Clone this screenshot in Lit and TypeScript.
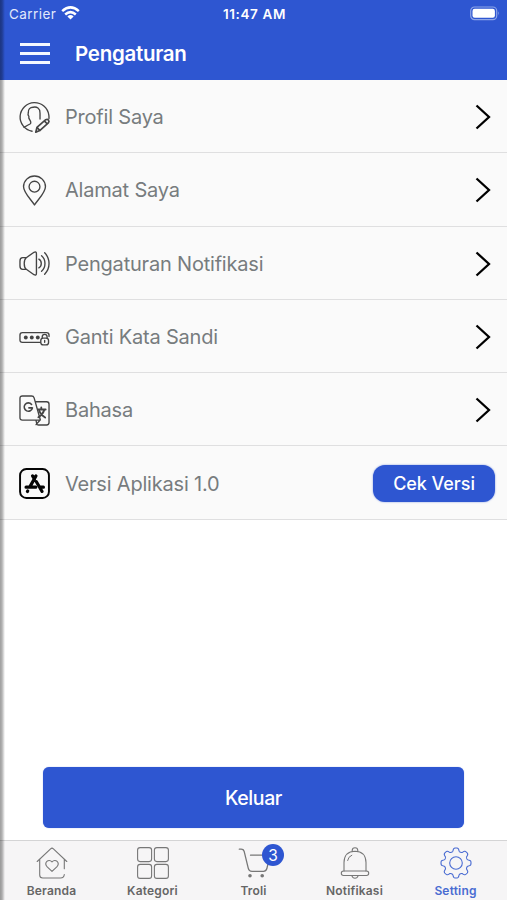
import { LitElement, html, css, svg } from "lit";
import { customElement, property } from "lit/decorators.js";
import { classMap } from "lit/directives/class-map.js";

/** Closed outline of an eight-lobed gear centred on (16, 16). */
const gearPath = (() => {
  const pts: string[] = [];
  for (let i = 0; i < 240; i++) {
    const a = (i / 240) * Math.PI * 2;
    const r = 13.3 + 1.75 * Math.tanh(1.9 * Math.cos(8 * a) + 0.25);
    pts.push(`${(16 + r * Math.sin(a)).toFixed(2)} ${(16 - r * Math.cos(a)).toFixed(2)}`);
  }
  return `M${pts.join("L")}Z`;
})();

const icons: Record<string, unknown> = {
  profile: svg`
    <path d="M30.900 17.200Q31.100 15.500 30.800 13.500A14.900 14.900 0 1 0 13.500 30.200"/>
    <path d="M5.200 26.200Q9.500 23.600 11.400 22.700C12.800 21.800 12.100 20 11 18.300Q9.700 16.500 10.200 14.800Q8.800 13.200 9.600 11.200C9.300 7.500 11.500 5.300 14.700 5.400C18.200 4.600 21.900 6.500 21.700 11.500V17.500"/>
    <path d="M17.300 31.200L18.500 26.300L27.600 18.300Q29.300 17.300 30.400 18.700Q31.600 20.100 30.300 21.600L21.400 29.500ZM18.600 26.200L21.500 29.500M26.200 19.500L29.200 22.700" stroke-width="1.700"/>`,
  pin: svg`
    <path d="M16 31C13.500 26.500 4.700 18.500 4.700 12.100A11.300 11.100 0 0 1 27.300 12.100C27.300 18.500 18.500 26.500 16 31Z"/>
    <circle cx="16" cy="12.100" r="5.600"/>`,
  sound: svg`
    <path d="M7.500 10H3.800Q1 10 1 13.500V18.500Q1 22 3.800 22H7.500Q5.400 20.500 5.400 16T7.500 10L15.500 4.400Q18 3.300 18 6V26Q18 28.700 15.500 27.600L7.500 22"/>
    <path d="M20.500 11.500Q23 12.800 23 16T20.500 20.500M23.300 8Q26.800 10.900 26.800 16T23.300 24M26.500 5Q31 9.600 31 16T26.500 27"/>`,
  password: svg`
    <path d="M22 21H3.500Q1 21 1 18.500V13.500Q1 11 3.500 11H28.500Q31 11 31 13.500V15"/>
    <g class="solid"><circle cx="7" cy="16" r="2"/><circle cx="13.200" cy="16" r="2"/><circle cx="19.400" cy="16" r="2"/></g>
    <rect x="22.500" y="16.600" width="8" height="7" rx="2.500"/>
    <path d="M24 16.400V15.200A2.500 2.500 0 0 1 29 15.200V16.400M26.500 19V21"/>`,
  translate: svg`
    <path d="M17.200 7H28.500Q31 7 31 9.500V28.500Q31 31 28.500 31H20Q18.700 31 18.300 29.500L17.500 26H3.500Q1 26 1 23.500V3.500Q1 1 3.500 1H13Q15 1 15.600 3L22 25.500L17.600 30.600M17.500 26H21.800"/>
    <path d="M13 9.700A4.300 4.300 0 1 0 13.900 13.300H10.200" stroke-width="1.600"/>
    <path d="M19.800 15H27.500M23 12.800V15M26.200 15.300Q24.500 20.500 20 23M21 16.500Q22.500 20.700 27 23.300" stroke-width="1.900"/>`,
  store: svg`
    <rect x="1.100" y="1.100" width="29.800" height="29.800" rx="6.500" stroke-width="2"/>
    <path d="M17.500 8.200L11.200 19.500M14 8.200L16 11.500M17.800 14L23.800 24.200M7.300 19.800H17.300M22 19.800H25.200M8.700 24.200L9 23.800" stroke-width="3.300"/>`,
  home: svg`
    <path d="M1.200 14.500L14.600 1.800Q16 .5 17.400 1.800L30.800 14.500M3.700 12.400V28Q3.700 31 6.700 31H24.500Q28 31 28.300 27.500M28.300 12.400V21.800"/>
    <path d="M16 24.400L11.200 19.900C7.500 16 12.500 11 16 14.900C19.500 11 24.500 16 20.800 19.900Z"/>`,
  grid: svg`
    <rect x=".6" y=".6" width="14" height="14" rx="2.500"/><rect x="17.400" y=".6" width="14" height="14" rx="2.500"/>
    <rect x=".6" y="17.400" width="14" height="14" rx="2.500"/><rect x="17.400" y="17.400" width="14" height="14" rx="2.500"/>`,
  cart: svg`
    <path d="M1.300 2.200H3.200Q5.500 2.200 6.100 4.200L10.300 21.300Q11 24.300 14 24.300H25.500Q28 24.300 28.800 21.800L31.200 11.500Q31.800 8.200 29 8.200H12.500" stroke-width="1.300"/>
    <g class="solid"><circle cx="12" cy="28.700" r="1.800"/><circle cx="24.200" cy="28.700" r="1.800"/></g>`,
  bell: svg`
    <path d="M13.200 4.300V3.500A2.800 2.800 0 0 1 18.800 3.500V4.300M5 24V15.500Q5.300 4.500 16 4.300Q26.700 4.500 27 15.500V24M12.800 28.600Q13.700 31.200 16 31.200T19.200 28.600"/>
    <rect x="2.300" y="24" width="27.400" height="4.500" rx="2.200"/><path d="M8.600 13.500Q9.200 9.600 12.800 8.200" stroke-width="1"/>`,
  gear: svg`<path d=${gearPath}/><circle cx="16" cy="16" r="6.300"/>`,
};

@customElement("line-icon")
class LineIcon extends LitElement {
  @property() name = "";
  static styles = css`
    :host { display: block; width: 32px; height: 32px; flex: none; }
    svg { display: block; width: 100%; height: 100%; overflow: visible; fill: none;
      stroke: currentColor; stroke-width: var(--weight, 1.250); stroke-linecap: round; stroke-linejoin: round; }
    .solid { fill: currentColor; stroke: none; }
  `;
  render() {
    return html`<svg viewBox="0 0 32 32">${icons[this.name]}</svg>`;
  }
}

const rows = [
  { icon: "profile", label: "Profil Saya" },
  { icon: "pin", label: "Alamat Saya" },
  { icon: "sound", label: "Pengaturan Notifikasi" },
  { icon: "password", label: "Ganti Kata Sandi" },
  { icon: "translate", label: "Bahasa" },
  { icon: "store", label: "Versi Aplikasi 1.0", action: "Cek Versi" },
];

const tabs = [
  { icon: "home", label: "Beranda" },
  { icon: "grid", label: "Kategori" },
  { icon: "cart", label: "Troli", badge: 3 },
  { icon: "bell", label: "Notifikasi" },
  { icon: "gear", label: "Setting", active: true },
];

@customElement("app-root")
class AppRoot extends LitElement {
  static styles = css`
    :host { display: flex; flex-direction: column; position: relative; box-sizing: border-box; width: 100%; height: 900px;
      overflow: hidden; background: #fff; font-family: Inter, "Liberation Sans", sans-serif; }
    header { height: 80px; background: #2e56d1; color: #fff; flex: none; }
    .status { display: grid; grid-template-columns: 1fr auto 1fr; align-items: center; height: 27px; padding: 0 7px 0 9px; font-size: 13.500px; }
    .carrier { display: flex; align-items: center; gap: 5px; color: #e1e8fb; letter-spacing: 0.420px; }
    .wifi { width: 19px; height: 14px; margin-top: -2px; }
    .clock { font-weight: 600; font-size: 13.500px; letter-spacing: 0.620px; }
    .battery { justify-self: end; width: 30px; height: 15px; }
    .bar { display: flex; align-items: center; height: 53px; padding-left: 20px; gap: 25px; }
    .menu { width: 30px; height: 21px; display: flex; flex-direction: column; justify-content: space-between; }
    .line { height: 3px; background: #f5f8ff; }
    h1 { margin: 0; font-size: 20.500px; font-weight: 600; letter-spacing: -0.280px; }
    .row { display: flex; align-items: center; box-sizing: border-box; height: 73.300px; padding: 2px 12px 0 19px; background: #fafafa; border-bottom: 1.500px solid #dfdfe0; }
    .row line-icon { width: 31px; height: 31px; color: #444; --weight: 1.400; }
    .row .store { color: #050505; }
    .label { flex: 1; margin-left: 15px; font-size: 20px; letter-spacing: -0.200px; color: #777c7e; white-space: nowrap; }
    .chevron { width: 16px; height: 26px; margin-right: 4.500px; fill: none; stroke: #000; stroke-width: 2.300; }
    .check { width: 122px; height: 37px; border-radius: 12px; background: #2e56d1; color: #fff; display: grid; place-items: center; font-size: 18px; font-weight: 500; letter-spacing: -0.050px; box-shadow: 0 0 2px #7892de; }
    .body { flex: 1; display: flex; flex-direction: column; justify-content: flex-end; padding: 0 43px 12px; }
    .logout { height: 61px; border-radius: 6px; background: #2e56d1; color: #fff; display: grid; place-items: center; font-size: 19.500px; font-weight: 500; letter-spacing: -0.400px; box-shadow: 0 0 1px #7892de; }
    nav { flex: none; display: flex; box-sizing: border-box; height: 60px; background: #f6f5f6; border-top: 1px solid #d4d4d5; padding: 0 1px; }
    .tab { flex: 1; display: flex; flex-direction: column; align-items: center; padding-top: 6px; color: #777; }
    .tab line-icon { --weight: 1.100; }
    .caption { margin-top: 4px; font-size: 12px; line-height: 15px; font-weight: 600; color: #666; letter-spacing: 0.180px; }
    .active, .active .caption { color: #4a6cd2; }
    .glyph { position: relative; }
    .badge { position: absolute; left: 24.500px; top: -3px; width: 22px; height: 22px; border-radius: 50%; background: #2e56d1; color: #fff; display: grid; place-items: center; font-size: 15.500px; }
    .edge { position: absolute; inset: 0 auto 0 0; width: 5px; background: linear-gradient(90deg, rgba(0,0,0,.38), rgba(0,0,0,.3) 40%, rgba(0,0,0,0)); }
  `;
  render() {
    return html`
      <header>
        <div class="status">
          <div class="carrier"><span>Carrier</span>
            <svg class="wifi" viewBox="0 0 19 14" fill="none" stroke="#fff" stroke-width="2.500">
              <path d="M1.200 5.200Q9.500-2.400 17.800 5.200M4.200 8.500Q9.500 3.700 14.800 8.500"/><path d="M6.400 10.400Q9.500 7.800 12.600 10.400L9.500 13.600Z" fill="#fff" stroke="none"/>
            </svg>
          </div>
          <div class="clock">11:47 AM</div>
          <svg class="battery" viewBox="0 0 30 15">
            <rect x=".7" y="1" width="26" height="12.600" rx="3.800" fill="none" stroke="#8ea5e8" stroke-width="1.200"/>
            <rect x="2.500" y="2.800" width="22.400" height="9" rx="2.200" fill="#fff"/><path d="M28.200 5.200Q30 7.300 28.200 9.400Z" fill="#8ea5e8"/>
          </svg>
        </div>
        <div class="bar"><div class="menu"><div class="line"></div><div class="line"></div><div class="line"></div></div><h1>Pengaturan</h1></div>
      </header>
      <main>
        ${rows.map((r) => html`
          <div class="row">
            <line-icon class=${r.icon} name=${r.icon}></line-icon>
            <div class="label">${r.label}</div>
            ${r.action
              ? html`<div class="check">${r.action}</div>`
              : html`<svg class="chevron" viewBox="0 0 16 26"><path d="M1.500 1.500L14 13L1.500 24.500"/></svg>`}
          </div>`)}
      </main>
      <div class="body"><div class="logout">Keluar</div></div>
      <nav>
        ${tabs.map((t) => html`
          <div class=${classMap({ tab: true, active: !!t.active })}>
            <div class="glyph"><line-icon name=${t.icon}></line-icon>${t.badge ? html`<div class="badge">${t.badge}</div>` : ""}</div>
            <div class="caption">${t.label}</div>
          </div>`)}
      </nav>
      <div class="edge"></div>`;
  }
}
